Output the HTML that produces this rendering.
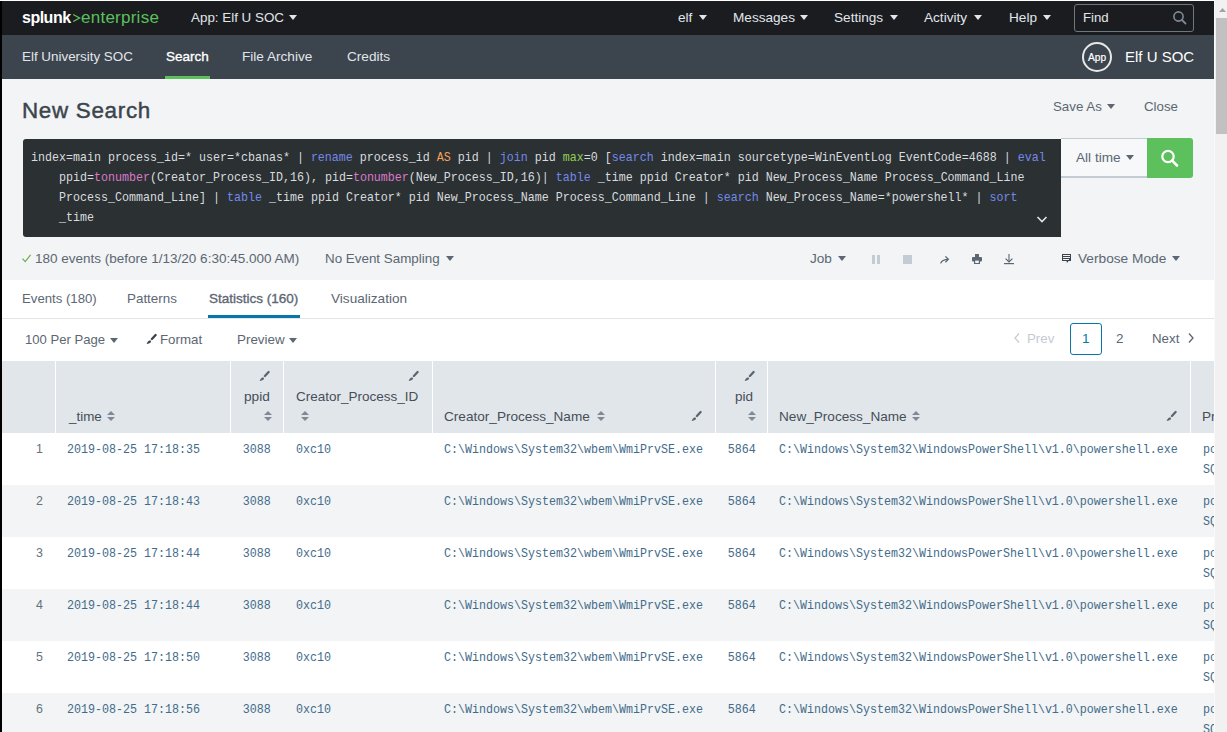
<!DOCTYPE html>
<html><head><meta charset="utf-8"><title>Splunk Search</title>
<style>html,body{margin:0;padding:0;width:1227px;height:732px;overflow:hidden;background:#f2f4f5;position:relative}
div,svg{box-sizing:content-box}</style></head><body>
<div style="position:absolute;left:0px;top:0px;width:1227px;height:732px;background:#f2f4f5"></div>
<div style="position:absolute;left:0px;top:1px;width:1214px;height:34px;background:#1a1c20"></div>
<div style="position:absolute;left:0px;top:35px;width:1214px;height:44px;background:#3c444d"></div>
<div style="position:absolute;left:22px;top:17.96px;line-height:0;white-space:pre;font-family:'Liberation Sans', sans-serif;font-size:16px;font-weight:700;color:#ffffff;letter-spacing:-0.5px">splunk</div>
<svg style="position:absolute;left:72px;top:13px;" width="9" height="10" viewBox="0 0 9 10"><polyline points="1.2,1.5 7.5,5 1.2,8.5" fill="none" stroke="#5cc05c" stroke-width="1.4"/></svg>
<div style="position:absolute;left:81px;top:17.62px;line-height:0;white-space:pre;font-family:'Liberation Sans', sans-serif;font-size:17px;font-weight:400;color:#5cc05c;letter-spacing:0.25px">enterprise</div>
<div style="position:absolute;left:191px;top:18.24px;line-height:0;white-space:pre;font-family:'Liberation Sans', sans-serif;font-size:13.4px;font-weight:400;color:#e1e6eb;">App: Elf U SOC</div>
<div style="position:absolute;left:289px;top:15px;width:0;height:0;border-left:4.0px solid transparent;border-right:4.0px solid transparent;border-top:5px solid #e1e6eb"></div>
<div style="position:absolute;left:678px;top:18.18px;line-height:0;white-space:pre;font-family:'Liberation Sans', sans-serif;font-size:13.6px;font-weight:400;color:#e1e6eb;">elf</div>
<div style="position:absolute;left:699px;top:15px;width:0;height:0;border-left:4.0px solid transparent;border-right:4.0px solid transparent;border-top:5px solid #e1e6eb"></div>
<div style="position:absolute;left:733px;top:18.18px;line-height:0;white-space:pre;font-family:'Liberation Sans', sans-serif;font-size:13.6px;font-weight:400;color:#e1e6eb;">Messages</div>
<div style="position:absolute;left:800px;top:15px;width:0;height:0;border-left:4.0px solid transparent;border-right:4.0px solid transparent;border-top:5px solid #e1e6eb"></div>
<div style="position:absolute;left:834px;top:18.18px;line-height:0;white-space:pre;font-family:'Liberation Sans', sans-serif;font-size:13.6px;font-weight:400;color:#e1e6eb;">Settings</div>
<div style="position:absolute;left:890px;top:15px;width:0;height:0;border-left:4.0px solid transparent;border-right:4.0px solid transparent;border-top:5px solid #e1e6eb"></div>
<div style="position:absolute;left:924px;top:18.18px;line-height:0;white-space:pre;font-family:'Liberation Sans', sans-serif;font-size:13.6px;font-weight:400;color:#e1e6eb;">Activity</div>
<div style="position:absolute;left:974px;top:15px;width:0;height:0;border-left:4.0px solid transparent;border-right:4.0px solid transparent;border-top:5px solid #e1e6eb"></div>
<div style="position:absolute;left:1009px;top:18.18px;line-height:0;white-space:pre;font-family:'Liberation Sans', sans-serif;font-size:13.6px;font-weight:400;color:#e1e6eb;">Help</div>
<div style="position:absolute;left:1043px;top:15px;width:0;height:0;border-left:4.0px solid transparent;border-right:4.0px solid transparent;border-top:5px solid #e1e6eb"></div>
<div style="position:absolute;left:1074px;top:4px;width:120px;height:28px;border:1px solid #6d7780;border-radius:3px;box-sizing:border-box;background:#1a1c20"></div>
<div style="position:absolute;left:1083px;top:18.31px;line-height:0;white-space:pre;font-family:'Liberation Sans', sans-serif;font-size:13.2px;font-weight:400;color:#e1e6eb;">Find</div>
<svg style="position:absolute;left:1172px;top:10px;" width="16" height="16" viewBox="0 0 16 16"><circle cx="6.5" cy="6.5" r="4.6" fill="none" stroke="#7f8a96" stroke-width="1.6"/><line x1="9.8" y1="9.8" x2="13.5" y2="13.5" stroke="#7f8a96" stroke-width="1.8" stroke-linecap="round"/></svg>
<div style="position:absolute;left:22px;top:57.24px;line-height:0;white-space:pre;font-family:'Liberation Sans', sans-serif;font-size:13.4px;font-weight:400;color:#e1e6eb;">Elf University SOC</div>
<div style="position:absolute;left:166px;top:57.21px;line-height:0;white-space:pre;font-family:'Liberation Sans', sans-serif;font-size:13.5px;font-weight:400;color:#ffffff;-webkit-text-stroke:0.35px #ffffff">Search</div>
<div style="position:absolute;left:165px;top:76px;width:45px;height:3px;background:#5cc05c"></div>
<div style="position:absolute;left:242px;top:57.18px;line-height:0;white-space:pre;font-family:'Liberation Sans', sans-serif;font-size:13.6px;font-weight:400;color:#e1e6eb;">File Archive</div>
<div style="position:absolute;left:347px;top:57.18px;line-height:0;white-space:pre;font-family:'Liberation Sans', sans-serif;font-size:13.6px;font-weight:400;color:#e1e6eb;">Credits</div>
<div style="position:absolute;left:1082px;top:42px;width:30px;height:30px;border:2px solid #e8e8e8;border-radius:50%;box-sizing:border-box"></div>
<div style="position:absolute;left:1088px;top:57.83px;line-height:0;white-space:pre;font-family:'Liberation Sans', sans-serif;font-size:10.2px;font-weight:400;color:#ffffff;-webkit-text-stroke:0.2px #ffffff">App</div>
<div style="position:absolute;left:1125px;top:56.70px;line-height:0;white-space:pre;font-family:'Liberation Sans', sans-serif;font-size:15px;font-weight:400;color:#ffffff;">Elf U SOC</div>
<div style="position:absolute;left:22px;top:110.78px;line-height:0;white-space:pre;font-family:'Liberation Sans', sans-serif;font-size:22.4px;font-weight:400;color:#3c444d;letter-spacing:0.7px;-webkit-text-stroke:0.45px #3c444d">New Search</div>
<div style="position:absolute;left:1053px;top:107.28px;line-height:0;white-space:pre;font-family:'Liberation Sans', sans-serif;font-size:13.3px;font-weight:400;color:#5c6773;">Save As</div>
<div style="position:absolute;left:1107px;top:104px;width:0;height:0;border-left:4.0px solid transparent;border-right:4.0px solid transparent;border-top:5px solid #5c6773"></div>
<div style="position:absolute;left:1144px;top:107.28px;line-height:0;white-space:pre;font-family:'Liberation Sans', sans-serif;font-size:13.3px;font-weight:400;color:#5c6773;">Close</div>
<div style="position:absolute;left:23px;top:139px;width:1038px;height:98px;background:#2b3033;border-radius:3px 0 0 3px"></div>
<div style="position:absolute;left:31px;top:157.87px;line-height:0;white-space:pre;font-family:'Liberation Mono', monospace;font-size:13.6px;font-weight:400;color:#d8dcdf;transform:scaleX(0.8577);transform-origin:0 0;">index=main process_id=* user=*cbanas* | <span style="color:#7389ea">rename</span> process_id <span style="color:#f5a05a">AS</span> pid | <span style="color:#7389ea">join</span> pid <span style="color:#8fcf55">max</span>=0 [<span style="color:#7389ea">search</span> index=main sourcetype=WinEventLog EventCode=4688 | <span style="color:#7389ea">eval</span></div>
<div style="position:absolute;left:59px;top:177.87px;line-height:0;white-space:pre;font-family:'Liberation Mono', monospace;font-size:13.6px;font-weight:400;color:#d8dcdf;transform:scaleX(0.8577);transform-origin:0 0;">ppid=<span style="color:#d97ac8">tonumber</span>(Creator_Process_ID,16), pid=<span style="color:#d97ac8">tonumber</span>(New_Process_ID,16)| <span style="color:#7389ea">table</span> _time ppid Creator* pid New_Process_Name Process_Command_Line</div>
<div style="position:absolute;left:59px;top:197.87px;line-height:0;white-space:pre;font-family:'Liberation Mono', monospace;font-size:13.6px;font-weight:400;color:#d8dcdf;transform:scaleX(0.8577);transform-origin:0 0;">Process_Command_Line] | <span style="color:#7389ea">table</span> _time ppid Creator* pid New_Process_Name Process_Command_Line | <span style="color:#7389ea">search</span> New_Process_Name=*powershell* | <span style="color:#7389ea">sort</span></div>
<div style="position:absolute;left:59px;top:217.87px;line-height:0;white-space:pre;font-family:'Liberation Mono', monospace;font-size:13.6px;font-weight:400;color:#d8dcdf;transform:scaleX(0.8577);transform-origin:0 0;">_time</div>
<svg style="position:absolute;left:1036px;top:215px;" width="12" height="9" viewBox="0 0 12 9"><polyline points="1.5,2 6,6.5 10.5,2" fill="none" stroke="#e1e6eb" stroke-width="1.6"/></svg>
<div style="position:absolute;left:1061px;top:138px;width:86px;height:40px;background:#f7f8fa;border-top:1px solid #c3cbd4;border-bottom:2px solid #c3cbd4;box-sizing:border-box"></div>
<div style="position:absolute;left:1076px;top:158.18px;line-height:0;white-space:pre;font-family:'Liberation Sans', sans-serif;font-size:13.6px;font-weight:400;color:#5c6773;">All time</div>
<div style="position:absolute;left:1126px;top:155px;width:0;height:0;border-left:4.0px solid transparent;border-right:4.0px solid transparent;border-top:5px solid #5c6773"></div>
<div style="position:absolute;left:1147px;top:138px;width:46px;height:40px;background:#5cc05c;border-radius:0 3px 3px 0"></div>
<svg style="position:absolute;left:1158px;top:147px;" width="24" height="24" viewBox="0 0 24 24"><circle cx="10" cy="9.5" r="5.7" fill="none" stroke="#ffffff" stroke-width="2.2"/><line x1="14.2" y1="13.7" x2="19" y2="18.5" stroke="#ffffff" stroke-width="2.6" stroke-linecap="round"/></svg>
<svg style="position:absolute;left:21px;top:253px;" width="11" height="11" viewBox="0 0 11 11"><polyline points="1.5,5.6 4.2,8.6 9.6,1.8" fill="none" stroke="#6aab4a" stroke-width="1.15"/></svg>
<div style="position:absolute;left:35px;top:259.21px;line-height:0;white-space:pre;font-family:'Liberation Sans', sans-serif;font-size:13.5px;font-weight:400;color:#5c6773;">180 events (before 1/13/20 6:30:45.000 AM)</div>
<div style="position:absolute;left:325px;top:259.24px;line-height:0;white-space:pre;font-family:'Liberation Sans', sans-serif;font-size:13.4px;font-weight:400;color:#5c6773;">No Event Sampling</div>
<div style="position:absolute;left:446px;top:256px;width:0;height:0;border-left:4.0px solid transparent;border-right:4.0px solid transparent;border-top:5px solid #5c6773"></div>
<div style="position:absolute;left:810px;top:259.18px;line-height:0;white-space:pre;font-family:'Liberation Sans', sans-serif;font-size:13.6px;font-weight:400;color:#5c6773;">Job</div>
<div style="position:absolute;left:838px;top:256px;width:0;height:0;border-left:4.0px solid transparent;border-right:4.0px solid transparent;border-top:5px solid #5c6773"></div>
<div style="position:absolute;left:872px;top:255px;width:3px;height:9px;background:#c3cbd4"></div>
<div style="position:absolute;left:877px;top:255px;width:3px;height:9px;background:#c3cbd4"></div>
<div style="position:absolute;left:903px;top:255px;width:9px;height:9px;background:#c3cbd4"></div>
<svg style="position:absolute;left:939px;top:254px;" width="12" height="12" viewBox="0 0 12 12"><path d="M1.6,9.4 C2.6,6.6 4.6,5.3 9.2,5.3" fill="none" stroke="#5c6773" stroke-width="1.3"/><polyline points="6.4,2.4 9.3,5.3 6.4,8.2" fill="none" stroke="#5c6773" stroke-width="1.3"/></svg>
<svg style="position:absolute;left:971px;top:253px;" width="12" height="12" viewBox="0 0 12 12"><rect x="4" y="1" width="4" height="3" fill="#5c6773"/><rect x="1" y="4" width="10" height="4.5" rx="1" fill="#5c6773"/><rect x="3" y="6.5" width="6" height="4.5" fill="#5c6773"/><rect x="4.2" y="7.6" width="3.6" height="2.4" fill="#f2f4f5"/></svg>
<svg style="position:absolute;left:1003px;top:253px;" width="12" height="12" viewBox="0 0 12 12"><line x1="6" y1="1" x2="6" y2="8.8" stroke="#5c6773" stroke-width="1.1"/><polyline points="2.6,5.6 6,9 9.4,5.6" fill="none" stroke="#5c6773" stroke-width="1.2"/><line x1="1" y1="10.6" x2="11" y2="10.6" stroke="#5c6773" stroke-width="1.2"/></svg>
<svg style="position:absolute;left:1061px;top:253px;" width="12" height="11" viewBox="0 0 12 11"><rect x="1" y="1" width="9" height="7" fill="#3c444d"/><rect x="2" y="2" width="7" height="1" fill="#f2f4f5"/><rect x="2" y="4" width="7" height="1" fill="#f2f4f5"/><rect x="2" y="6" width="6" height="1" fill="#f2f4f5"/><path d="M5.5,8 H7.5 L6,10 Z" fill="#3c444d"/></svg>
<div style="position:absolute;left:1078px;top:259.14px;line-height:0;white-space:pre;font-family:'Liberation Sans', sans-serif;font-size:13.7px;font-weight:400;color:#5c6773;">Verbose Mode</div>
<div style="position:absolute;left:1172px;top:256px;width:0;height:0;border-left:4.0px solid transparent;border-right:4.0px solid transparent;border-top:5px solid #5c6773"></div>
<div style="position:absolute;left:0px;top:280px;width:1214px;height:452px;background:#ffffff"></div>
<div style="position:absolute;left:22px;top:299.31px;line-height:0;white-space:pre;font-family:'Liberation Sans', sans-serif;font-size:13.2px;font-weight:400;color:#5c6773;">Events (180)</div>
<div style="position:absolute;left:127px;top:299.24px;line-height:0;white-space:pre;font-family:'Liberation Sans', sans-serif;font-size:13.4px;font-weight:400;color:#5c6773;">Patterns</div>
<div style="position:absolute;left:209px;top:299.21px;line-height:0;white-space:pre;font-family:'Liberation Sans', sans-serif;font-size:13.5px;font-weight:400;color:#5c6773;-webkit-text-stroke:0.35px #5c6773">Statistics (160)</div>
<div style="position:absolute;left:208px;top:315px;width:92px;height:3px;background:#0877a6"></div>
<div style="position:absolute;left:331px;top:299.18px;line-height:0;white-space:pre;font-family:'Liberation Sans', sans-serif;font-size:13.6px;font-weight:400;color:#5c6773;">Visualization</div>
<div style="position:absolute;left:0px;top:318px;width:1214px;height:1px;background:#e1e6eb"></div>
<div style="position:absolute;left:25px;top:339.95px;line-height:0;white-space:pre;font-family:'Liberation Sans', sans-serif;font-size:13.1px;font-weight:400;color:#5c6773;">100 Per Page</div>
<div style="position:absolute;left:110px;top:338px;width:0;height:0;border-left:4.0px solid transparent;border-right:4.0px solid transparent;border-top:5px solid #5c6773"></div>
<svg style="position:absolute;left:145px;top:333px;" width="12" height="12" viewBox="0 0 12 12"><line x1="10.6" y1="2" x2="6.9" y2="6.0" stroke="#3c444d" stroke-width="2.3" stroke-linecap="round"/><path d="M5.6,7.6 C6.6,8.6 6,10.6 1.6,11 C2.4,9.8 2.6,8.2 4.2,7.5 Z" fill="#3c444d"/></svg>
<div style="position:absolute;left:160px;top:339.88px;line-height:0;white-space:pre;font-family:'Liberation Sans', sans-serif;font-size:13.3px;font-weight:400;color:#5c6773;">Format</div>
<div style="position:absolute;left:237px;top:339.84px;line-height:0;white-space:pre;font-family:'Liberation Sans', sans-serif;font-size:13.4px;font-weight:400;color:#5c6773;">Preview</div>
<div style="position:absolute;left:289px;top:338px;width:0;height:0;border-left:4.0px solid transparent;border-right:4.0px solid transparent;border-top:5px solid #5c6773"></div>
<svg style="position:absolute;left:1013px;top:332px;" width="8" height="12" viewBox="0 0 8 12"><polyline points="6,1.5 2,6 6,10.5" fill="none" stroke="#c3cbd4" stroke-width="1.3"/></svg>
<div style="position:absolute;left:1027px;top:339.28px;line-height:0;white-space:pre;font-family:'Liberation Sans', sans-serif;font-size:13.3px;font-weight:400;color:#c3cbd4;">Prev</div>
<div style="position:absolute;left:1070px;top:323px;width:32px;height:32px;border:1px solid #0877a6;border-radius:3px;box-sizing:border-box"></div>
<div style="position:absolute;left:1082px;top:339.21px;line-height:0;white-space:pre;font-family:'Liberation Sans', sans-serif;font-size:13.5px;font-weight:400;color:#0877a6;">1</div>
<div style="position:absolute;left:1116px;top:339.21px;line-height:0;white-space:pre;font-family:'Liberation Sans', sans-serif;font-size:13.5px;font-weight:400;color:#5c6773;">2</div>
<div style="position:absolute;left:1152px;top:339.28px;line-height:0;white-space:pre;font-family:'Liberation Sans', sans-serif;font-size:13.3px;font-weight:400;color:#5c6773;">Next</div>
<svg style="position:absolute;left:1187px;top:332px;" width="8" height="12" viewBox="0 0 8 12"><polyline points="2,1.5 6,6 2,10.5" fill="none" stroke="#5c6773" stroke-width="1.3"/></svg>
<div style="position:absolute;left:2px;top:361px;width:1212px;height:72px;background:#e1e6eb"></div>
<div style="position:absolute;left:55px;top:361px;width:1px;height:72px;background:#ffffff"></div>
<div style="position:absolute;left:230px;top:361px;width:1px;height:72px;background:#ffffff"></div>
<div style="position:absolute;left:283px;top:361px;width:1px;height:72px;background:#ffffff"></div>
<div style="position:absolute;left:432px;top:361px;width:1px;height:72px;background:#ffffff"></div>
<div style="position:absolute;left:715px;top:361px;width:1px;height:72px;background:#ffffff"></div>
<div style="position:absolute;left:767px;top:361px;width:1px;height:72px;background:#ffffff"></div>
<div style="position:absolute;left:1190px;top:361px;width:1px;height:72px;background:#ffffff"></div>
<div style="position:absolute;left:69px;top:417.24px;line-height:0;white-space:pre;font-family:'Liberation Sans', sans-serif;font-size:13.4px;font-weight:400;color:#464e57;">_time</div>
<svg style="position:absolute;left:107px;top:411px;" width="8" height="10" viewBox="0 0 8 10"><path d="M4,0 L8,4 H0 Z M0,6 H8 L4,10 Z" fill="#7f8a96"/></svg>
<svg style="position:absolute;left:258px;top:370px;" width="12" height="12" viewBox="0 0 12 12"><line x1="10.6" y1="2" x2="6.9" y2="6.0" stroke="#5c6773" stroke-width="2.3" stroke-linecap="round"/><path d="M5.6,7.6 C6.6,8.6 6,10.6 1.6,11 C2.4,9.8 2.6,8.2 4.2,7.5 Z" fill="#5c6773"/></svg>
<div style="position:absolute;left:244px;top:397.14px;line-height:0;white-space:pre;font-family:'Liberation Sans', sans-serif;font-size:13.7px;font-weight:400;color:#464e57;">ppid</div>
<svg style="position:absolute;left:264px;top:411px;" width="8" height="10" viewBox="0 0 8 10"><path d="M4,0 L8,4 H0 Z M0,6 H8 L4,10 Z" fill="#7f8a96"/></svg>
<svg style="position:absolute;left:407px;top:370px;" width="12" height="12" viewBox="0 0 12 12"><line x1="10.6" y1="2" x2="6.9" y2="6.0" stroke="#5c6773" stroke-width="2.3" stroke-linecap="round"/><path d="M5.6,7.6 C6.6,8.6 6,10.6 1.6,11 C2.4,9.8 2.6,8.2 4.2,7.5 Z" fill="#5c6773"/></svg>
<div style="position:absolute;left:296px;top:397.21px;line-height:0;white-space:pre;font-family:'Liberation Sans', sans-serif;font-size:13.5px;font-weight:400;color:#464e57;">Creator_Process_ID</div>
<svg style="position:absolute;left:301px;top:411px;" width="8" height="10" viewBox="0 0 8 10"><path d="M4,0 L8,4 H0 Z M0,6 H8 L4,10 Z" fill="#7f8a96"/></svg>
<div style="position:absolute;left:444px;top:417.18px;line-height:0;white-space:pre;font-family:'Liberation Sans', sans-serif;font-size:13.6px;font-weight:400;color:#464e57;">Creator_Process_Name</div>
<svg style="position:absolute;left:597px;top:411px;" width="8" height="10" viewBox="0 0 8 10"><path d="M4,0 L8,4 H0 Z M0,6 H8 L4,10 Z" fill="#7f8a96"/></svg>
<svg style="position:absolute;left:690px;top:410px;" width="12" height="12" viewBox="0 0 12 12"><line x1="10.6" y1="2" x2="6.9" y2="6.0" stroke="#5c6773" stroke-width="2.3" stroke-linecap="round"/><path d="M5.6,7.6 C6.6,8.6 6,10.6 1.6,11 C2.4,9.8 2.6,8.2 4.2,7.5 Z" fill="#5c6773"/></svg>
<svg style="position:absolute;left:743px;top:370px;" width="12" height="12" viewBox="0 0 12 12"><line x1="10.6" y1="2" x2="6.9" y2="6.0" stroke="#5c6773" stroke-width="2.3" stroke-linecap="round"/><path d="M5.6,7.6 C6.6,8.6 6,10.6 1.6,11 C2.4,9.8 2.6,8.2 4.2,7.5 Z" fill="#5c6773"/></svg>
<div style="position:absolute;left:735px;top:397.21px;line-height:0;white-space:pre;font-family:'Liberation Sans', sans-serif;font-size:13.5px;font-weight:400;color:#464e57;">pid</div>
<svg style="position:absolute;left:748px;top:411px;" width="8" height="10" viewBox="0 0 8 10"><path d="M4,0 L8,4 H0 Z M0,6 H8 L4,10 Z" fill="#7f8a96"/></svg>
<div style="position:absolute;left:779px;top:417.18px;line-height:0;white-space:pre;font-family:'Liberation Sans', sans-serif;font-size:13.6px;font-weight:400;color:#464e57;">New_Process_Name</div>
<svg style="position:absolute;left:912px;top:411px;" width="8" height="10" viewBox="0 0 8 10"><path d="M4,0 L8,4 H0 Z M0,6 H8 L4,10 Z" fill="#7f8a96"/></svg>
<svg style="position:absolute;left:1165px;top:410px;" width="12" height="12" viewBox="0 0 12 12"><line x1="10.6" y1="2" x2="6.9" y2="6.0" stroke="#5c6773" stroke-width="2.3" stroke-linecap="round"/><path d="M5.6,7.6 C6.6,8.6 6,10.6 1.6,11 C2.4,9.8 2.6,8.2 4.2,7.5 Z" fill="#5c6773"/></svg>
<div style="position:absolute;left:1202px;top:417.18px;line-height:0;white-space:pre;font-family:'Liberation Sans', sans-serif;font-size:13.6px;font-weight:400;color:#464e57;">Process_Command_Line</div>
<div style="position:absolute;left:2px;top:433px;width:1212px;height:52px;background:#ffffff"></div>
<div style="position:absolute;right:1184px;top:449.38px;line-height:0;white-space:pre;text-align:right;font-family:'Liberation Sans', sans-serif;font-size:12.4px;font-weight:400;color:#67717c;">1</div>
<div style="position:absolute;left:67px;top:449.87px;line-height:0;white-space:pre;font-family:'Liberation Mono', monospace;font-size:13.6px;font-weight:400;color:#436b8a;transform:scaleX(0.8577);transform-origin:0 0;">2019-08-25 17:18:35</div>
<div style="position:absolute;right:956px;top:449.87px;line-height:0;white-space:pre;text-align:right;font-family:'Liberation Mono', monospace;font-size:13.6px;font-weight:400;color:#436b8a;transform:scaleX(0.8577);transform-origin:100% 0;">3088</div>
<div style="position:absolute;left:296px;top:449.87px;line-height:0;white-space:pre;font-family:'Liberation Mono', monospace;font-size:13.6px;font-weight:400;color:#436b8a;transform:scaleX(0.8577);transform-origin:0 0;">0xc10</div>
<div style="position:absolute;left:444px;top:449.87px;line-height:0;white-space:pre;font-family:'Liberation Mono', monospace;font-size:13.6px;font-weight:400;color:#436b8a;transform:scaleX(0.8577);transform-origin:0 0;">C:\Windows\System32\wbem\WmiPrvSE.exe</div>
<div style="position:absolute;right:471px;top:449.87px;line-height:0;white-space:pre;text-align:right;font-family:'Liberation Mono', monospace;font-size:13.6px;font-weight:400;color:#436b8a;transform:scaleX(0.8577);transform-origin:100% 0;">5864</div>
<div style="position:absolute;left:779px;top:449.87px;line-height:0;white-space:pre;font-family:'Liberation Mono', monospace;font-size:13.6px;font-weight:400;color:#436b8a;transform:scaleX(0.8577);transform-origin:0 0;">C:\Windows\System32\WindowsPowerShell\v1.0\powershell.exe</div>
<div style="position:absolute;left:1203px;top:449.87px;line-height:0;white-space:pre;font-family:'Liberation Mono', monospace;font-size:13.6px;font-weight:400;color:#436b8a;transform:scaleX(0.8577);transform-origin:0 0;">powershell</div>
<div style="position:absolute;left:1203px;top:469.87px;line-height:0;white-space:pre;font-family:'Liberation Mono', monospace;font-size:13.6px;font-weight:400;color:#436b8a;transform:scaleX(0.8577);transform-origin:0 0;">SQL</div>
<div style="position:absolute;left:2px;top:485px;width:1212px;height:52px;background:#f2f4f5"></div>
<div style="position:absolute;right:1184px;top:501.38px;line-height:0;white-space:pre;text-align:right;font-family:'Liberation Sans', sans-serif;font-size:12.4px;font-weight:400;color:#67717c;">2</div>
<div style="position:absolute;left:67px;top:501.87px;line-height:0;white-space:pre;font-family:'Liberation Mono', monospace;font-size:13.6px;font-weight:400;color:#436b8a;transform:scaleX(0.8577);transform-origin:0 0;">2019-08-25 17:18:43</div>
<div style="position:absolute;right:956px;top:501.87px;line-height:0;white-space:pre;text-align:right;font-family:'Liberation Mono', monospace;font-size:13.6px;font-weight:400;color:#436b8a;transform:scaleX(0.8577);transform-origin:100% 0;">3088</div>
<div style="position:absolute;left:296px;top:501.87px;line-height:0;white-space:pre;font-family:'Liberation Mono', monospace;font-size:13.6px;font-weight:400;color:#436b8a;transform:scaleX(0.8577);transform-origin:0 0;">0xc10</div>
<div style="position:absolute;left:444px;top:501.87px;line-height:0;white-space:pre;font-family:'Liberation Mono', monospace;font-size:13.6px;font-weight:400;color:#436b8a;transform:scaleX(0.8577);transform-origin:0 0;">C:\Windows\System32\wbem\WmiPrvSE.exe</div>
<div style="position:absolute;right:471px;top:501.87px;line-height:0;white-space:pre;text-align:right;font-family:'Liberation Mono', monospace;font-size:13.6px;font-weight:400;color:#436b8a;transform:scaleX(0.8577);transform-origin:100% 0;">5864</div>
<div style="position:absolute;left:779px;top:501.87px;line-height:0;white-space:pre;font-family:'Liberation Mono', monospace;font-size:13.6px;font-weight:400;color:#436b8a;transform:scaleX(0.8577);transform-origin:0 0;">C:\Windows\System32\WindowsPowerShell\v1.0\powershell.exe</div>
<div style="position:absolute;left:1203px;top:501.87px;line-height:0;white-space:pre;font-family:'Liberation Mono', monospace;font-size:13.6px;font-weight:400;color:#436b8a;transform:scaleX(0.8577);transform-origin:0 0;">powershell</div>
<div style="position:absolute;left:1203px;top:521.87px;line-height:0;white-space:pre;font-family:'Liberation Mono', monospace;font-size:13.6px;font-weight:400;color:#436b8a;transform:scaleX(0.8577);transform-origin:0 0;">SQL</div>
<div style="position:absolute;left:2px;top:537px;width:1212px;height:52px;background:#ffffff"></div>
<div style="position:absolute;right:1184px;top:553.38px;line-height:0;white-space:pre;text-align:right;font-family:'Liberation Sans', sans-serif;font-size:12.4px;font-weight:400;color:#67717c;">3</div>
<div style="position:absolute;left:67px;top:553.87px;line-height:0;white-space:pre;font-family:'Liberation Mono', monospace;font-size:13.6px;font-weight:400;color:#436b8a;transform:scaleX(0.8577);transform-origin:0 0;">2019-08-25 17:18:44</div>
<div style="position:absolute;right:956px;top:553.87px;line-height:0;white-space:pre;text-align:right;font-family:'Liberation Mono', monospace;font-size:13.6px;font-weight:400;color:#436b8a;transform:scaleX(0.8577);transform-origin:100% 0;">3088</div>
<div style="position:absolute;left:296px;top:553.87px;line-height:0;white-space:pre;font-family:'Liberation Mono', monospace;font-size:13.6px;font-weight:400;color:#436b8a;transform:scaleX(0.8577);transform-origin:0 0;">0xc10</div>
<div style="position:absolute;left:444px;top:553.87px;line-height:0;white-space:pre;font-family:'Liberation Mono', monospace;font-size:13.6px;font-weight:400;color:#436b8a;transform:scaleX(0.8577);transform-origin:0 0;">C:\Windows\System32\wbem\WmiPrvSE.exe</div>
<div style="position:absolute;right:471px;top:553.87px;line-height:0;white-space:pre;text-align:right;font-family:'Liberation Mono', monospace;font-size:13.6px;font-weight:400;color:#436b8a;transform:scaleX(0.8577);transform-origin:100% 0;">5864</div>
<div style="position:absolute;left:779px;top:553.87px;line-height:0;white-space:pre;font-family:'Liberation Mono', monospace;font-size:13.6px;font-weight:400;color:#436b8a;transform:scaleX(0.8577);transform-origin:0 0;">C:\Windows\System32\WindowsPowerShell\v1.0\powershell.exe</div>
<div style="position:absolute;left:1203px;top:553.87px;line-height:0;white-space:pre;font-family:'Liberation Mono', monospace;font-size:13.6px;font-weight:400;color:#436b8a;transform:scaleX(0.8577);transform-origin:0 0;">powershell</div>
<div style="position:absolute;left:1203px;top:573.87px;line-height:0;white-space:pre;font-family:'Liberation Mono', monospace;font-size:13.6px;font-weight:400;color:#436b8a;transform:scaleX(0.8577);transform-origin:0 0;">SQL</div>
<div style="position:absolute;left:2px;top:589px;width:1212px;height:52px;background:#f2f4f5"></div>
<div style="position:absolute;right:1184px;top:605.38px;line-height:0;white-space:pre;text-align:right;font-family:'Liberation Sans', sans-serif;font-size:12.4px;font-weight:400;color:#67717c;">4</div>
<div style="position:absolute;left:67px;top:605.87px;line-height:0;white-space:pre;font-family:'Liberation Mono', monospace;font-size:13.6px;font-weight:400;color:#436b8a;transform:scaleX(0.8577);transform-origin:0 0;">2019-08-25 17:18:44</div>
<div style="position:absolute;right:956px;top:605.87px;line-height:0;white-space:pre;text-align:right;font-family:'Liberation Mono', monospace;font-size:13.6px;font-weight:400;color:#436b8a;transform:scaleX(0.8577);transform-origin:100% 0;">3088</div>
<div style="position:absolute;left:296px;top:605.87px;line-height:0;white-space:pre;font-family:'Liberation Mono', monospace;font-size:13.6px;font-weight:400;color:#436b8a;transform:scaleX(0.8577);transform-origin:0 0;">0xc10</div>
<div style="position:absolute;left:444px;top:605.87px;line-height:0;white-space:pre;font-family:'Liberation Mono', monospace;font-size:13.6px;font-weight:400;color:#436b8a;transform:scaleX(0.8577);transform-origin:0 0;">C:\Windows\System32\wbem\WmiPrvSE.exe</div>
<div style="position:absolute;right:471px;top:605.87px;line-height:0;white-space:pre;text-align:right;font-family:'Liberation Mono', monospace;font-size:13.6px;font-weight:400;color:#436b8a;transform:scaleX(0.8577);transform-origin:100% 0;">5864</div>
<div style="position:absolute;left:779px;top:605.87px;line-height:0;white-space:pre;font-family:'Liberation Mono', monospace;font-size:13.6px;font-weight:400;color:#436b8a;transform:scaleX(0.8577);transform-origin:0 0;">C:\Windows\System32\WindowsPowerShell\v1.0\powershell.exe</div>
<div style="position:absolute;left:1203px;top:605.87px;line-height:0;white-space:pre;font-family:'Liberation Mono', monospace;font-size:13.6px;font-weight:400;color:#436b8a;transform:scaleX(0.8577);transform-origin:0 0;">powershell</div>
<div style="position:absolute;left:1203px;top:625.87px;line-height:0;white-space:pre;font-family:'Liberation Mono', monospace;font-size:13.6px;font-weight:400;color:#436b8a;transform:scaleX(0.8577);transform-origin:0 0;">SQL</div>
<div style="position:absolute;left:2px;top:641px;width:1212px;height:52px;background:#ffffff"></div>
<div style="position:absolute;right:1184px;top:657.38px;line-height:0;white-space:pre;text-align:right;font-family:'Liberation Sans', sans-serif;font-size:12.4px;font-weight:400;color:#67717c;">5</div>
<div style="position:absolute;left:67px;top:657.87px;line-height:0;white-space:pre;font-family:'Liberation Mono', monospace;font-size:13.6px;font-weight:400;color:#436b8a;transform:scaleX(0.8577);transform-origin:0 0;">2019-08-25 17:18:50</div>
<div style="position:absolute;right:956px;top:657.87px;line-height:0;white-space:pre;text-align:right;font-family:'Liberation Mono', monospace;font-size:13.6px;font-weight:400;color:#436b8a;transform:scaleX(0.8577);transform-origin:100% 0;">3088</div>
<div style="position:absolute;left:296px;top:657.87px;line-height:0;white-space:pre;font-family:'Liberation Mono', monospace;font-size:13.6px;font-weight:400;color:#436b8a;transform:scaleX(0.8577);transform-origin:0 0;">0xc10</div>
<div style="position:absolute;left:444px;top:657.87px;line-height:0;white-space:pre;font-family:'Liberation Mono', monospace;font-size:13.6px;font-weight:400;color:#436b8a;transform:scaleX(0.8577);transform-origin:0 0;">C:\Windows\System32\wbem\WmiPrvSE.exe</div>
<div style="position:absolute;right:471px;top:657.87px;line-height:0;white-space:pre;text-align:right;font-family:'Liberation Mono', monospace;font-size:13.6px;font-weight:400;color:#436b8a;transform:scaleX(0.8577);transform-origin:100% 0;">5864</div>
<div style="position:absolute;left:779px;top:657.87px;line-height:0;white-space:pre;font-family:'Liberation Mono', monospace;font-size:13.6px;font-weight:400;color:#436b8a;transform:scaleX(0.8577);transform-origin:0 0;">C:\Windows\System32\WindowsPowerShell\v1.0\powershell.exe</div>
<div style="position:absolute;left:1203px;top:657.87px;line-height:0;white-space:pre;font-family:'Liberation Mono', monospace;font-size:13.6px;font-weight:400;color:#436b8a;transform:scaleX(0.8577);transform-origin:0 0;">powershell</div>
<div style="position:absolute;left:1203px;top:677.87px;line-height:0;white-space:pre;font-family:'Liberation Mono', monospace;font-size:13.6px;font-weight:400;color:#436b8a;transform:scaleX(0.8577);transform-origin:0 0;">SQL</div>
<div style="position:absolute;left:2px;top:693px;width:1212px;height:52px;background:#f2f4f5"></div>
<div style="position:absolute;right:1184px;top:709.38px;line-height:0;white-space:pre;text-align:right;font-family:'Liberation Sans', sans-serif;font-size:12.4px;font-weight:400;color:#67717c;">6</div>
<div style="position:absolute;left:67px;top:709.87px;line-height:0;white-space:pre;font-family:'Liberation Mono', monospace;font-size:13.6px;font-weight:400;color:#436b8a;transform:scaleX(0.8577);transform-origin:0 0;">2019-08-25 17:18:56</div>
<div style="position:absolute;right:956px;top:709.87px;line-height:0;white-space:pre;text-align:right;font-family:'Liberation Mono', monospace;font-size:13.6px;font-weight:400;color:#436b8a;transform:scaleX(0.8577);transform-origin:100% 0;">3088</div>
<div style="position:absolute;left:296px;top:709.87px;line-height:0;white-space:pre;font-family:'Liberation Mono', monospace;font-size:13.6px;font-weight:400;color:#436b8a;transform:scaleX(0.8577);transform-origin:0 0;">0xc10</div>
<div style="position:absolute;left:444px;top:709.87px;line-height:0;white-space:pre;font-family:'Liberation Mono', monospace;font-size:13.6px;font-weight:400;color:#436b8a;transform:scaleX(0.8577);transform-origin:0 0;">C:\Windows\System32\wbem\WmiPrvSE.exe</div>
<div style="position:absolute;right:471px;top:709.87px;line-height:0;white-space:pre;text-align:right;font-family:'Liberation Mono', monospace;font-size:13.6px;font-weight:400;color:#436b8a;transform:scaleX(0.8577);transform-origin:100% 0;">5864</div>
<div style="position:absolute;left:779px;top:709.87px;line-height:0;white-space:pre;font-family:'Liberation Mono', monospace;font-size:13.6px;font-weight:400;color:#436b8a;transform:scaleX(0.8577);transform-origin:0 0;">C:\Windows\System32\WindowsPowerShell\v1.0\powershell.exe</div>
<div style="position:absolute;left:1203px;top:709.87px;line-height:0;white-space:pre;font-family:'Liberation Mono', monospace;font-size:13.6px;font-weight:400;color:#436b8a;transform:scaleX(0.8577);transform-origin:0 0;">powershell</div>
<div style="position:absolute;left:1203px;top:729.87px;line-height:0;white-space:pre;font-family:'Liberation Mono', monospace;font-size:13.6px;font-weight:400;color:#436b8a;transform:scaleX(0.8577);transform-origin:0 0;">SQL</div>
<div style="position:absolute;left:0px;top:0px;width:2px;height:732px;background:#000000"></div>
<div style="position:absolute;left:0px;top:0px;width:1227px;height:1px;background:#ffffff"></div>
<div style="position:absolute;left:1214px;top:0px;width:13px;height:732px;background:#f1f1f1;border-left:1px solid #fafafa;box-sizing:border-box"></div>
<svg style="position:absolute;left:1214px;top:1px;" width="13" height="17" viewBox="0 0 13 17"><path d="M5,11 L8.5,7 L12,11 Z" fill="#a3a3a3"/></svg>
<div style="position:absolute;left:1216px;top:18px;width:11px;height:116px;background:#c1c1c1"></div>
</body></html>
